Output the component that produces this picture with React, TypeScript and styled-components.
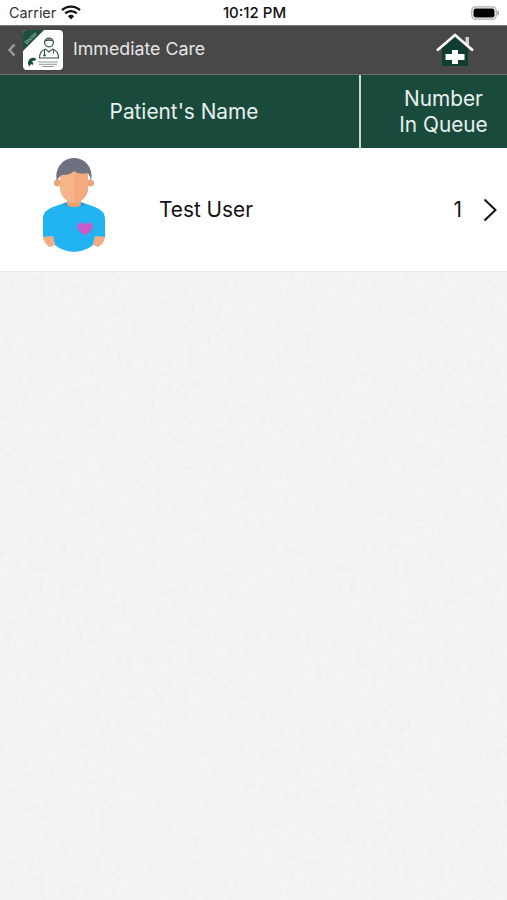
import styled, { createGlobalStyle } from 'styled-components';

const paper =
  "data:image/svg+xml,%3Csvg xmlns='http://www.w3.org/2000/svg' width='300' height='300'%3E%3Cfilter id='n'%3E%3CfeTurbulence type='fractalNoise' baseFrequency='0.18' numOctaves='3' seed='4'/%3E%3CfeColorMatrix values='0 0 0 0 0.6 0 0 0 0 0.6 0 0 0 0 0.6 0 0 0 0.22 -0.06'/%3E%3C/filter%3E%3Crect width='300' height='300' filter='url(%23n)'/%3E%3C/svg%3E";

const GlobalStyle = createGlobalStyle`
  html, body {
    margin: 0;
    padding: 0;
    font-family: Inter, "Liberation Sans", sans-serif;
    background: #f4f4f4;
  }
`;

const Page = styled.div`
  width: 507px;
  height: 900px;
  display: flex;
  flex-direction: column;
  overflow: hidden;
`;

const StatusBar = styled.div`
  height: 25px;
  background: #fff;
  display: grid;
  grid-template-columns: 1fr auto 1fr;
  align-items: center;
  padding: 0 7px 0 9px;
  box-sizing: border-box;
  color: #111;
`;

const StatusLeft = styled.div`
  display: flex;
  align-items: center;
  gap: 5px;
  font-size: 14.4px;
  color: #333;
`;

const StatusTime = styled.div`
  font-size: 15px;
  font-weight: 500;
  color: #111;
`;

const StatusRight = styled.div`
  display: flex;
  justify-content: flex-end;
`;

const NavBar = styled.div`
  height: 50px;
  background: #484848;
  border-top: 1px solid #777;
  border-bottom: 1px solid #6f6f6f;
  box-sizing: border-box;
  display: flex;
  align-items: center;
  padding: 0 32px 0 7px;
`;

const BackChevron = styled.svg`
  width: 10px;
  height: 14px;
  margin-right: 6px;
`;

const NavTitle = styled.div`
  margin-left: 10px;
  padding-bottom: 3px;
  flex: 1;
  font-size: 17.8px;
  color: #e6e6e6;
`;

const TableHead = styled.div`
  height: 73px;
  background: #1a4a3c;
  display: grid;
  grid-template-columns: 359px 1fr;
  color: #e8f0ec;
`;

const HeadCell = styled.div<{ $divider?: boolean }>`
  display: flex;
  align-items: center;
  justify-content: center;
  text-align: center;
  font-size: 20.8px;
  line-height: 26px;
  padding-left: ${(p) => (p.$divider ? '19px' : '9px')};
  border-left: ${(p) => (p.$divider ? '2px solid #c9d6d0' : 'none')};
`;

const Row = styled.div`
  height: 124px;
  background: #fff;
  border-bottom: 1px solid #e8e8e8;
  box-sizing: border-box;
  display: flex;
  align-items: center;
  padding: 0 10px 0 38px;
  color: #111;
`;

const AvatarArt = styled.svg`
  width: 72px;
  height: 98px;
  margin-bottom: 8px;
`;

const UserName = styled.div`
  margin-left: 49px;
  flex: 1;
  font-size: 20.8px;
`;

const Count = styled.div`
  font-size: 20.8px;
  margin-right: 21px;
`;

const Paper = styled.div`
  flex: 1;
  background-color: #f5f5f5;
  background-image: url("${paper}");
`;

const Wifi = () => (
  <svg width="20" height="15" viewBox="0 0 20 15">
    <path d="M1 5.2a13 13 0 0 1 18 0" fill="none" stroke="#111" strokeWidth="2.4" />
    <path d="M4.2 8.4a8.5 8.5 0 0 1 11.6 0" fill="none" stroke="#111" strokeWidth="2.4" />
    <path d="M7 11.2a4 4 0 0 1 6 0L10 14.4z" fill="#111" />
  </svg>
);

const Battery = () => (
  <svg width="29" height="14" viewBox="0 0 29 14">
    <rect x="0.8" y="0.8" width="24.4" height="12.4" rx="3.6" fill="none" stroke="#aaa" strokeWidth="1.2" />
    <rect x="2.5" y="2.5" width="21" height="9" rx="2.2" fill="#000" />
    <rect x="26.3" y="4.8" width="1.7" height="4.4" rx="0.8" fill="#aaa" />
  </svg>
);

const AppLogo = () => (
  <svg width="40" height="40" viewBox="0 0 40 40">
    <rect width="40" height="40" rx="4" fill="#fff" />
    <path d="M0 21V4a4 4 0 0 1 4-4h17z" fill="#1d4f3f" />
    <text
      x="3.500"
      y="14.500"
      fontSize="4.600"
      fill="#dfe9e4"
      fontFamily="Inter, sans-serif"
      transform="rotate(-45 3.500 14.500)"
    >
      Doctor
    </text>
    <circle cx="26" cy="12.500" r="4.400" fill="#fff" stroke="#33524a" strokeWidth="1.200" />
    <path d="M21.700 11.500c.4-3 8.200-3.300 8.600 0-2.600-1-6-1-8.600 0z" fill="#33524a" />
    <path d="M16.500 28c0-6 3-8 6-9l3.500 3 3.500-3c3 1 6 3 6 9z" fill="#fff" stroke="#33524a" strokeWidth="1.100" />
    <path d="M21.500 20v4M30.500 20v3.500" stroke="#33524a" strokeWidth="1" fill="none" />
    <circle cx="21.500" cy="25.300" r="1.200" fill="#33524a" />
    <path d="M13 28.500a5 5 0 0 0-7 1.500 5 5 0 0 0 .5 6.500l1.500-2.500 1.500 1 1-1.500-1.500-2 4-1.500z" fill="#1d4f3f" />
    <path d="M15 32h20M16 34.300h18M19 36.500h12" stroke="#7f9088" strokeWidth="0.900" />
  </svg>
);

const HomeIcon = () => (
  <svg width="40" height="34" viewBox="0 0 40 34">
    <path d="M7 15.500 20 4l13 11.500V33H7z" fill="#0f3d31" />
    <rect x="30.500" y="4" width="3.500" height="8" fill="#cfcfcf" />
    <path d="M2 17.500 20 2l18 15.500" fill="none" stroke="#fff" strokeWidth="2.600" />
    <path d="M17 17h6v4h6.500v6H23v4h-6v-4h-6.500v-6H17z" fill="#fff" />
  </svg>
);

const Avatar = () => (
  <AvatarArt viewBox="0 0 72 98">
    <circle cx="19.500" cy="26" r="3.500" fill="#eca67c" />
    <circle cx="52.500" cy="26" r="3.500" fill="#eca67c" />
    <path d="M5 80 15 78l2 10-5 2c-4-2-6-5-7-10zM67 80 57 78l-2 10 5 2c4-2 6-5 7-10z" fill="#f4ab80" />
    <path
      d="M5 62c0-8 5-11 22-16 3 3 15 3 18 0 17 5 22 8 22 16v18l-10-1-2 9c-11 9-27 9-38 0l-2-9-10 1z"
      fill="#22b4f2"
    />
    <path d="M25 46.500c3-1 5-1.500 6-2h10c1 .5 3 1 6 2 -2 5-20 5-22 0z" fill="#17a3e0" />
    <path d="M29 38h14v10c-3 3-11 3-14 0z" fill="#ec9f72" />
    <path d="M22 14h28v17c0 8-7 15-14 15s-14-7-14-15z" fill="#f7b48a" />
    <path d="M36 14h14v17c0 8-7 15-14 15z" fill="#f4a97e" />
    <path
      d="M19 24C16 11 25 1 36 1s20 10 17 23c-.5-3-1.500-6-3-8-5 1-10 1-14-2-3 3-7 4-12 4-2 1-4 3-5 6z"
      fill="#6d7180"
    />
    <path d="M47 67.500c-3-4-9-2-7.500 3.500 1 3 4.500 5.500 7.500 7.500 3-2 6.500-4.500 7.500-7.500 1.500-5.500-4.500-7.500-7.500-3.500z" fill="#c75cc9" />
  </AvatarArt>
);

export default function App() {
  return (
    <Page>
      <GlobalStyle />
      <StatusBar>
        <StatusLeft>
          Carrier <Wifi />
        </StatusLeft>
        <StatusTime>10:12 PM</StatusTime>
        <StatusRight>
          <Battery />
        </StatusRight>
      </StatusBar>
      <NavBar>
        <BackChevron viewBox="0 0 10 14">
          <path d="M7.500 1.500 2.500 7l5 5.500" fill="none" stroke="#999" strokeWidth="2.600" />
        </BackChevron>
        <AppLogo />
        <NavTitle>Immediate Care</NavTitle>
        <HomeIcon />
      </NavBar>
      <TableHead>
        <HeadCell>Patient's Name</HeadCell>
        <HeadCell $divider>
          Number
          <br />
          In Queue
        </HeadCell>
      </TableHead>
      <Row>
        <Avatar />
        <UserName>Test User</UserName>
        <Count>1</Count>
        <svg width="14" height="24" viewBox="0 0 14 24">
          <path d="M1.500 1.500 12.500 12 1.500 22.500" fill="none" stroke="#111" strokeWidth="2" />
        </svg>
      </Row>
      <Paper />
    </Page>
  );
}
